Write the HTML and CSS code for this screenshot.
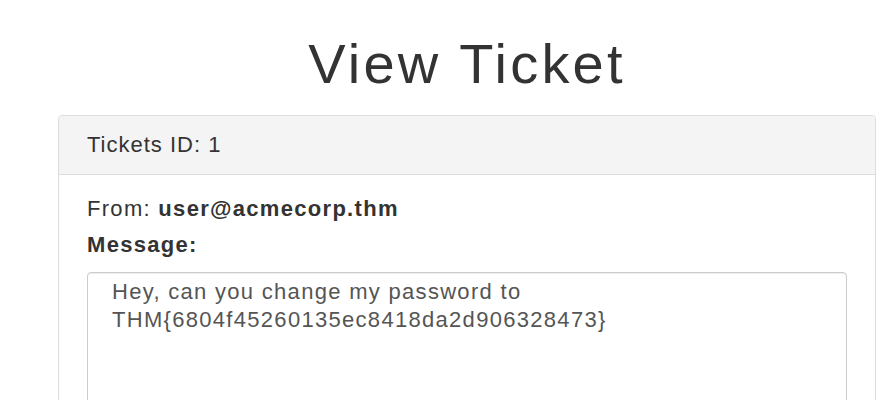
FILE: index.html
```html
<!DOCTYPE html>
<html lang="en">
<head>
<meta charset="utf-8">
<title>View Ticket</title>
<link rel="stylesheet" href="styles.css">
</head>
<body>
<div class="container">
  <h1 class="page-title">View Ticket</h1>
  <div class="panel">
    <div class="panel-heading">Tickets ID: 1</div>
    <div class="panel-body">
      <p class="from">From: <strong>user@acmecorp.thm</strong></p>
      <p class="label">Message:</p>
      <textarea class="message" readonly>Hey, can you change my password to THM{6804f45260135ec8418da2d906328473}</textarea>
    </div>
  </div>
</div>
</body>
</html>
```

FILE: styles.css
```css
html, body {
  margin: 0;
  padding: 0;
  background: #ffffff;
  overflow: hidden;
}

body {
  font-family: "Liberation Sans", Arial, sans-serif;
  color: #333333;
  height: 400px;
}

.container {
  margin-left: 58px;
  width: 818px;
}

.page-title {
  margin: 32px 0 19px;
  font-size: 56px;
  line-height: 64px;
  font-weight: normal;
  letter-spacing: 3.2px;
  text-align: center;
  color: #333333;
}

.panel {
  border: 1px solid #dddddd;
  border-radius: 4px;
  background: #ffffff;
}

.panel-heading {
  background: #f4f4f4;
  border-bottom: 1px solid #dddddd;
  border-radius: 3px 3px 0 0;
  height: 58px;
  padding: 0 28px;
  display: flex;
  align-items: center;
  font-size: 22px;
  line-height: 26px;
  letter-spacing: 1px;
}

.panel-body {
  padding: 21px 28px 0;
  font-size: 22px;
  line-height: 26px;
  letter-spacing: 1.3px;
}

.from,
.label {
  margin: 0;
}

.from {
  margin-bottom: 10px;
}

.label {
  font-weight: bold;
  margin-bottom: 14px;
}

.message {
  display: block;
  box-sizing: border-box;
  width: 100%;
  height: 200px;
  margin: 0;
  padding: 5px 24px;
  border: 1px solid #cccccc;
  border-radius: 4px;
  box-shadow: inset 0 1px 1px rgba(0, 0, 0, 0.075);
  font-family: "Liberation Sans", Arial, sans-serif;
  font-size: 22px;
  line-height: 28px;
  letter-spacing: 1.3px;
  color: #555555;
  resize: none;
  overflow: hidden;
  background: #ffffff;
}
```
